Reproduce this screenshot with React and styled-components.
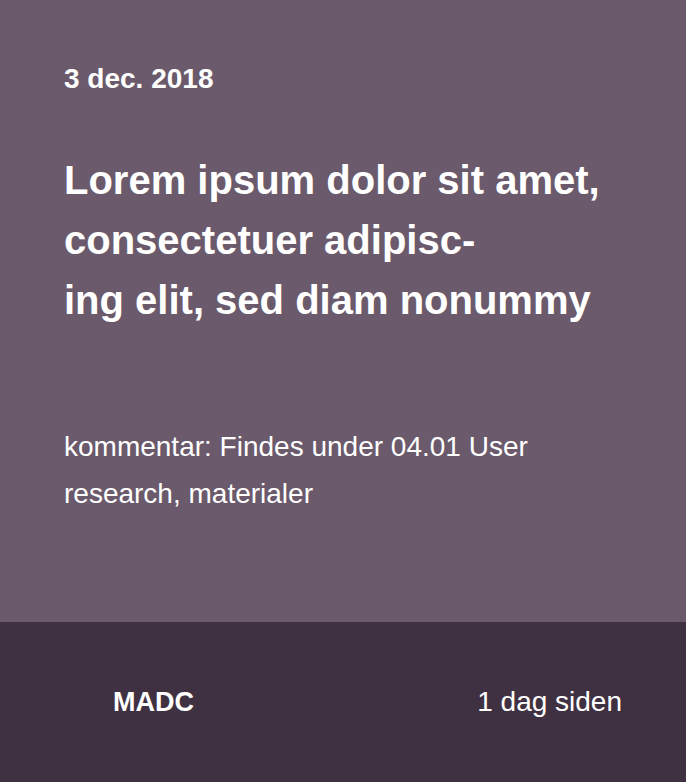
import React from 'react'
import styled, { createGlobalStyle } from 'styled-components'

const GlobalStyle = createGlobalStyle`
  html, body {
    margin: 0;
    padding: 0;
  }
  body {
    font-family: "Liberation Sans", Arial, sans-serif;
    background: #6a5a6b;
  }
`

const App = () => {
  return (
    <>
      <GlobalStyle />
      <Card>
        <Body>
          <Date>3 dec. 2018</Date>
          <Title>
            Lorem ipsum dolor sit amet,
            <br />
            consectetuer adipisc-
            <br />
            ing elit, sed diam nonummy
          </Title>
          <Comment>kommentar: Findes under 04.01 User research, materialer</Comment>
        </Body>
        <Footer>
          <Author>MADC</Author>
          <Time>1 dag siden</Time>
        </Footer>
      </Card>
    </>
  )
}

export default App

const Card = styled.div`
  width: 100%;
  height: 100vh;
  min-height: 782px;
  display: flex;
  flex-direction: column;
  background-color: #6a5a6b;
  color: #fff;
`

const Body = styled.div`
  height: 622px;
  box-sizing: border-box;
  padding: 64px 64px 0 64px;
  display: flex;
  flex-direction: column;
`

const Date = styled.div`
  font-size: 28px;
  line-height: 30px;
  font-weight: bold;
`

const Title = styled.h1`
  margin: 56px 0 0 0;
  font-size: 40px;
  line-height: 60px;
  font-weight: bold;
`

const Comment = styled.p`
  margin: 93px 0 0 0;
  font-size: 28px;
  line-height: 47px;
  font-weight: normal;
`

const Footer = styled.div`
  flex: 1;
  display: flex;
  align-items: center;
  justify-content: space-between;
  padding: 0 64px 0 113px;
  background-color: #3f3141;
`

const Author = styled.div`
  font-size: 27px;
  font-weight: bold;
`

const Time = styled.div`
  font-size: 28px;
`
